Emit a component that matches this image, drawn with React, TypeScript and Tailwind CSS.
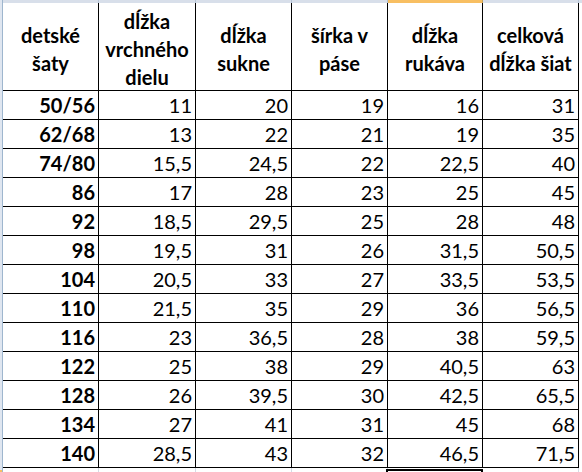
const headers = [
  ["detské", "šaty"],
  ["dĺžka", "vrchného", "dielu"],
  ["dĺžka", "sukne"],
  ["šírka v", "páse"],
  ["dĺžka", "rukáva"],
  ["celková", "dĺžka šiat"],
]

const rows = [
  ["50/56", "11", "20", "19", "16", "31"],
  ["62/68", "13", "22", "21", "19", "35"],
  ["74/80", "15,5", "24,5", "22", "22,5", "40"],
  ["86", "17", "28", "23", "25", "45"],
  ["92", "18,5", "29,5", "25", "28", "48"],
  ["98", "19,5", "31", "26", "31,5", "50,5"],
  ["104", "20,5", "33", "27", "33,5", "53,5"],
  ["110", "21,5", "35", "29", "36", "56,5"],
  ["116", "23", "36,5", "28", "38", "59,5"],
  ["122", "25", "38", "29", "40,5", "63"],
  ["128", "26", "39,5", "30", "42,5", "65,5"],
  ["134", "27", "41", "31", "45", "68"],
  ["140", "28,5", "43", "32", "46,5", "71,5"],
]

const gridCols = "grid grid-cols-[96px_97px_96px_96px_95px_96px]"

export default function App() {
  return (
    <div
      className="w-[582px] h-[472px] overflow-hidden bg-white flex flex-col text-black"
      style={{ fontFamily: "Lato, 'Open Sans', sans-serif" }}
    >
      {/* column header edge */}
      <div className="flex h-[3px] shrink-0">
        <div className="w-[3px] bg-[#dfe6f0] border-r border-[#9eb6ce]" />
        <div className={gridCols}>
          {headers.map((_, i) => (
            <div
              key={i}
              className={
                i === 4
                  ? "h-[3px] bg-[#f8bf62] border-r border-[#c9a25a]"
                  : "h-[3px] bg-[#d8dfea] border-r border-[#b6c4d6]"
              }
            />
          ))}
        </div>
        <div className="flex-1 bg-[#d8dfea]" />
      </div>

      <div className="flex flex-1">
        {/* row header edge */}
        <div className="w-[3px] flex flex-col bg-[#dfe6f0] border-r border-[#9eb6ce]">
          <div className="flex-1" />
          <div className="h-[4px] bg-[#f8bf62]" />
        </div>

        <div className="flex flex-col">
          <div className={gridCols}>
            {headers.map((lines, i) => (
              <div
                key={i}
                className="h-[88px] border-r border-b border-black flex flex-col items-center justify-center pt-[4px] text-[20px] leading-[28px] font-bold"
              >
                {lines.map((l) => (
                  <span key={l} className="whitespace-nowrap">{l}</span>
                ))}
              </div>
            ))}
          </div>

          {rows.map((row) => (
            <div key={row[0]} className={gridCols}>
              {row.map((v, i) => (
                <div
                  key={i}
                  className={
                    "h-[29px] border-r border-b border-black flex items-end justify-end pr-[3px] pb-[2px] text-[20px] leading-[24px] " +
                    (i === 0 ? "font-bold" : "")
                  }
                >
                  {v}
                </div>
              ))}
            </div>
          ))}

          {/* next empty row with active cell */}
          <div className={gridCols + " h-[6px]"}>
            {headers.map((_, i) => (
              <div
                key={i}
                className={
                  i === 4
                    ? "-ml-[2px] mt-[1px] border-l-2 border-t-2 border-r-2 border-black"
                    : "border-r border-[#d4dbe6]"
                }
              />
            ))}
          </div>
        </div>
      </div>
    </div>
  )
}
